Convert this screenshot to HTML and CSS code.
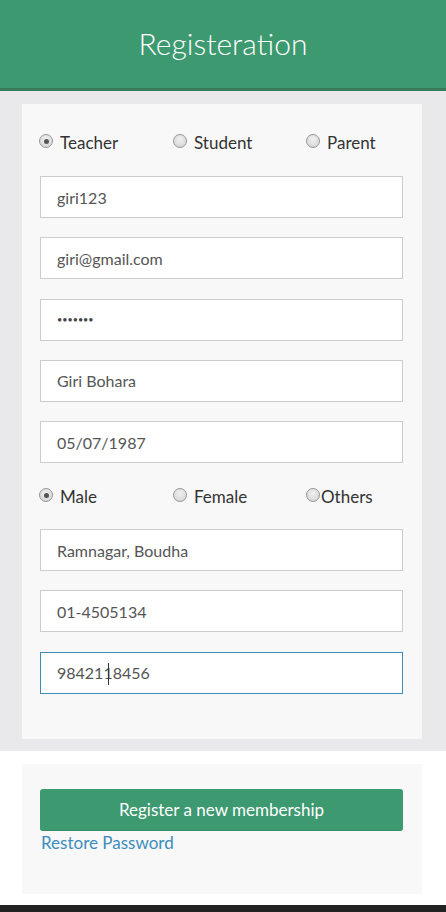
FILE: index.html
```html
<!DOCTYPE html>
<html>
<head>
<meta charset="utf-8">
<title>Registeration</title>
<link rel="stylesheet" href="styles.css">
</head>
<body>
<header class="topbar">
  <h1 class="title">Registeration</h1>
</header>
<main class="stage">
  <form class="card">
    <div class="radio-row">
      <label class="radio"><span class="dot checked"></span><span class="rtext">Teacher</span></label>
      <label class="radio"><span class="dot"></span><span class="rtext">Student</span></label>
      <label class="radio"><span class="dot"></span><span class="rtext">Parent</span></label>
    </div>
    <input class="field" type="text" value="giri123">
    <input class="field" type="text" value="giri@gmail.com">
    <input class="field pass" type="text" value="•••••••">
    <input class="field" type="text" value="Giri Bohara">
    <input class="field" type="text" value="05/07/1987">
    <div class="radio-row second">
      <label class="radio"><span class="dot checked"></span><span class="rtext">Male</span></label>
      <label class="radio"><span class="dot"></span><span class="rtext">Female</span></label>
      <label class="radio tight"><span class="dot"></span><span class="rtext">Others</span></label>
    </div>
    <input class="field" type="text" value="Ramnagar, Boudha">
    <input class="field" type="text" value="01-4505134">
    <div class="field-wrap">
      <input class="field focused" type="text" value="9842118456">
      <span class="caret"></span>
    </div>
  </form>
</main>
<section class="lower">
  <div class="card2">
    <button class="btn" type="button">Register a new membership</button>
    <a class="link" href="#">Restore Password</a>
  </div>
</section>
<footer class="bottom-bar"></footer>
</body>
</html>
```

FILE: styles.css
```css
* { box-sizing: border-box; }
html, body { margin: 0; padding: 0; }
body {
  font-family: "Lato", "Liberation Sans", sans-serif;
  color: #333;
  background: #fff;
  width: 446px;
  height: 912px;
  overflow: hidden;
}
.topbar {
  height: 91px;
  background: #3d9970;
  border-bottom: 3px solid #367b5c;
  display: flex;
  align-items: center;
  justify-content: center;
}
.title {
  margin: 0;
  color: #fff;
  font-weight: 300;
  font-size: 30px;
  line-height: 1;
  padding-bottom: 2px;
}
.stage {
  background: #e9e9eb;
  padding: 13px 24px 12px 22px;
}
.card {
  background: #f8f8f8;
  padding: 27px 19px 45px 18px;
  display: flex;
  flex-direction: column;
}
.radio-row {
  display: grid;
  grid-template-columns: 134px 133px auto;
  height: 24px;
  align-items: center;
  margin-bottom: 21px;
  font-size: 17px;
  color: #333;
}
.radio-row.second {
  margin-top: 2.75px;
  margin-bottom: 20px;
}
.radio {
  display: flex;
  align-items: center;
  gap: 7px;
}
.radio.tight { gap: 1px; }
.rtext { line-height: 24px; }
.dot {
  width: 14px;
  height: 14px;
  border-radius: 50%;
  border: 1px solid #979797;
  background: radial-gradient(circle at 50% 35%, #f0f0f0 0%, #dcdcdc 65%, #cbcbcb 100%);
  position: relative;
  margin-top: -4px;
  margin-left: -1px;
  flex: none;
}
.dot.checked::after {
  content: "";
  position: absolute;
  left: 3.5px;
  top: 3.5px;
  width: 5px;
  height: 5px;
  border-radius: 50%;
  background: #555;
}
.field {
  display: block;
  width: 363px;
  height: 42px;
  border: 1px solid #cccccc;
  background: #fff;
  padding: 0 16px;
  font-family: "Lato", "Liberation Sans", sans-serif;
  font-size: 16px;
  color: #555;
  margin: 0 0 19.25px 0;
  outline: none;
}
.field.pass {
  font-size: 9px;
  letter-spacing: 0;
  color: #444;
}
.field-wrap {
  position: relative;
}
.field-wrap .field { margin-bottom: 0; }
.field.focused { border-color: #3c8dbc; }
.caret {
  position: absolute;
  left: 68px;
  top: 11px;
  width: 1px;
  height: 22px;
  background: #333;
}
.lower {
  background: #fff;
  padding: 13px 24px 11px 22px;
}
.card2 {
  background: #f8f8f8;
  height: 130px;
  padding: 25px 19px 0 18px;
  display: flex;
  flex-direction: column;
  align-items: flex-start;
}
.btn {
  width: 363px;
  height: 42px;
  background: #3d9970;
  border: none;
  border-bottom: 1px solid #368a64;
  border-radius: 3px;
  color: #fff;
  font-family: "Lato", "Liberation Sans", sans-serif;
  font-size: 17px;
  cursor: pointer;
}
.link {
  margin-left: 1px;
  margin-top: 0;
  font-size: 17px;
  color: #3c8dbc;
  text-decoration: none;
  line-height: 24px;
}
.bottom-bar {
  height: 8px;
  background: #222;
}
```
